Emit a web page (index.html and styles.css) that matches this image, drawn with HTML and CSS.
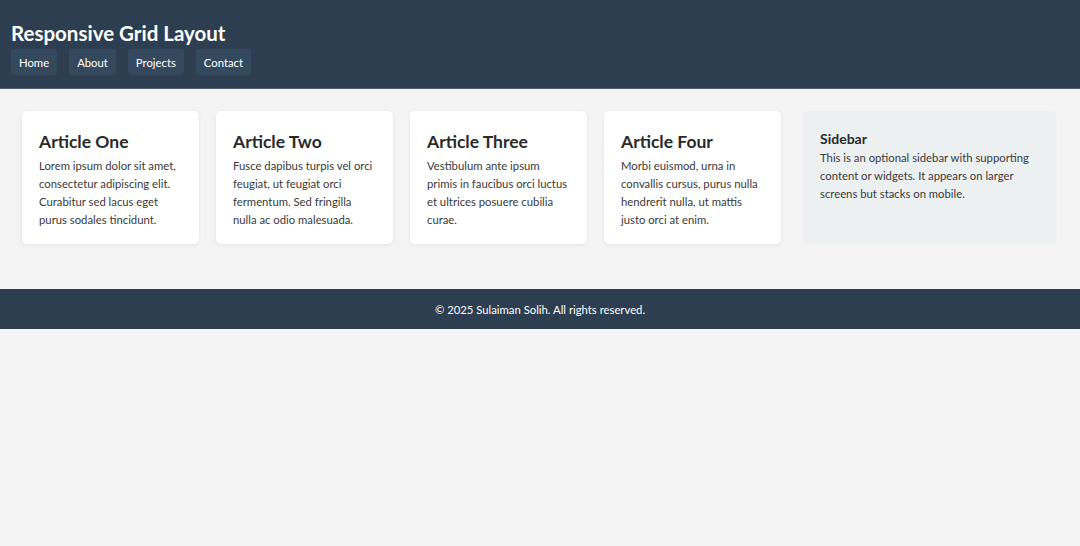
FILE: index.html
```html
<!DOCTYPE html>
<html lang="en">
<head>
<meta charset="utf-8">
<title>Responsive Grid Layout</title>
<link rel="stylesheet" href="styles.css">
</head>
<body>
<header class="site-header">
  <h1 class="site-title">Responsive Grid Layout</h1>
  <nav class="nav">
    <a class="nav-link" href="#">Home</a>
    <a class="nav-link" href="#">About</a>
    <a class="nav-link" href="#">Projects</a>
    <a class="nav-link" href="#">Contact</a>
  </nav>
</header>
<main class="grid">
  <article class="card">
    <h2 class="card-title">Article One</h2>
    <p class="card-text">Lorem ipsum dolor sit amet, consectetur adipiscing elit. Curabitur sed lacus eget purus sodales tincidunt.</p>
  </article>
  <article class="card">
    <h2 class="card-title">Article Two</h2>
    <p class="card-text">Fusce dapibus turpis vel orci feugiat, ut feugiat orci fermentum. Sed fringilla nulla ac odio malesuada.</p>
  </article>
  <article class="card">
    <h2 class="card-title">Article Three</h2>
    <p class="card-text">Vestibulum ante ipsum primis in faucibus orci luctus et ultrices posuere cubilia curae.</p>
  </article>
  <article class="card">
    <h2 class="card-title">Article Four</h2>
    <p class="card-text">Morbi euismod, urna in convallis cursus, purus nulla hendrerit nulla, ut mattis justo orci at enim.</p>
  </article>
  <aside class="sidebar">
    <h3 class="sidebar-title">Sidebar</h3>
    <p class="sidebar-text">This is an optional sidebar with supporting content or widgets. It appears on larger screens but stacks on mobile.</p>
  </aside>
</main>
<footer class="site-footer">
  <p class="footer-text">© 2025 Sulaiman Solih. All rights reserved.</p>
</footer>
</body>
</html>
```

FILE: styles.css
```css
* { box-sizing: border-box; }

html, body {
  margin: 0;
  padding: 0;
  background: #f4f4f4;
  font-family: Lato, "Open Sans", sans-serif;
  color: #333;
}

.site-header {
  background: #2c3e50;
  color: #fff;
  padding: 21px 11px 13px;
  border-bottom: 1px solid #4b5a68;
}

.site-title {
  margin: 0 0 4px;
  font-size: 20.5px;
  font-weight: 700;
  line-height: 24px;
}

.nav {
  display: flex;
  gap: 12px;
}

.nav-link {
  display: block;
  background: #34495e;
  color: #fff;
  text-decoration: none;
  font-size: 11.3px;
  line-height: 25px;
  padding: 1px 8px 0;
  border-radius: 3px;
}

.grid {
  display: grid;
  grid-template-columns: repeat(4, 177px) 1fr;
  column-gap: 17px;
  padding: 22px 23px 45px 22px;
}

.card {
  background: #fff;
  border-radius: 5px;
  padding: 19px 17px 15px;
  box-shadow: 0 1px 4px rgba(0, 0, 0, 0.07);
  min-height: 132px;
}

.card-title {
  margin: 0 0 3px;
  font-size: 17.5px;
  line-height: 24px;
  font-weight: 700;
  color: #2a2a2a;
}

.card-text {
  margin: 0;
  font-size: 11.3px;
  line-height: 18px;
  color: #3a3a3a;
}

.sidebar {
  margin-left: 5px;
  background: #ecf0f1;
  border-radius: 5px;
  padding: 19px 17px 15px;
}

.sidebar-title {
  margin: 0 0 1px;
  font-size: 14px;
  line-height: 18px;
  font-weight: 700;
  color: #2a2a2a;
}

.sidebar-text {
  margin: 0;
  font-size: 11.3px;
  line-height: 18px;
  color: #3a3a3a;
}

.site-footer {
  background: #2c3e50;
  color: #fff;
  text-align: center;
  padding: 13px 0 11px;
}

.footer-text {
  margin: 0;
  font-size: 11.3px;
  line-height: 16px;
}
```
